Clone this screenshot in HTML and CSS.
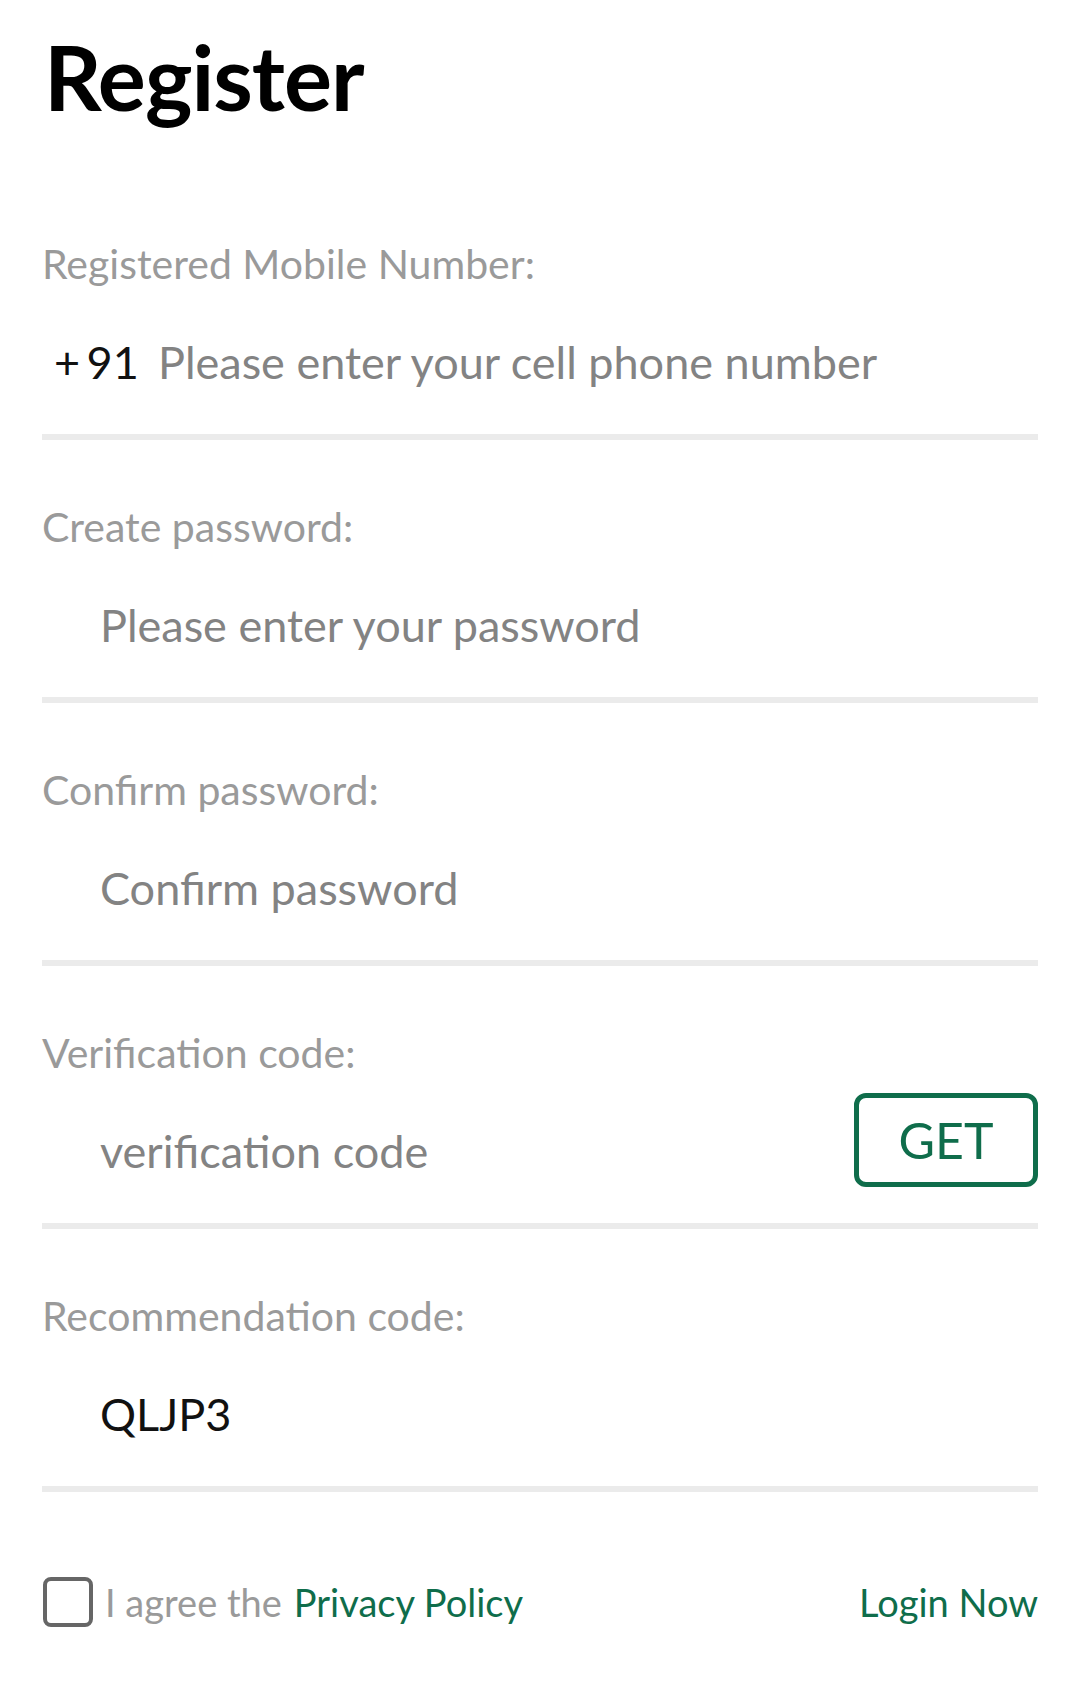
FILE: index.html
```html
<!DOCTYPE html>
<html lang="en">
<head>
<meta charset="utf-8">
<title>Register</title>
<link rel="stylesheet" href="styles.css">
</head>
<body>
<main class="page">
  <h1 class="title">Register</h1>

  <div class="field">
    <label class="label">Registered Mobile Number:</label>
    <div class="row">
      <span class="prefix">+ 91</span>
      <input class="input input-phone" type="tel" placeholder="Please enter your cell phone number">
    </div>
    <div class="divider"></div>
  </div>

  <div class="field">
    <label class="label">Create password:</label>
    <div class="row">
      <input class="input" type="password" placeholder="Please enter your password">
    </div>
    <div class="divider"></div>
  </div>

  <div class="field">
    <label class="label">Confirm password:</label>
    <div class="row">
      <input class="input" type="password" placeholder="Confirm password">
    </div>
    <div class="divider"></div>
  </div>

  <div class="field">
    <label class="label">Verification code:</label>
    <div class="row">
      <input class="input" type="text" placeholder="verification code">
      <button class="get-btn" type="button">GET</button>
    </div>
    <div class="divider"></div>
  </div>

  <div class="field">
    <label class="label">Recommendation code:</label>
    <div class="row">
      <input class="input" type="text" value="QLJP3">
    </div>
    <div class="divider"></div>
  </div>

  <div class="footer">
    <div class="agree">
      <span class="checkbox"></span>
      <span class="agree-text">I agree the</span>
      <a class="link" href="#">Privacy Policy</a>
    </div>
    <a class="link" href="#">Login Now</a>
  </div>
</main>
</body>
</html>
```

FILE: styles.css
```css
* { box-sizing: border-box; }

html, body {
  margin: 0;
  padding: 0;
  background: #ffffff;
}

body {
  font-family: Lato, "Noto Sans", "Liberation Sans", sans-serif;
  color: #111111;
}

.page {
  padding: 19px 42px 0 42px;
}

.title {
  margin: 0 0 43px 2px;
  font-size: 90px;
  line-height: 115px;
  font-weight: 700;
  color: #000000;
  letter-spacing: -1px;
}

.field {
  padding-top: 57px;
}

.label {
  display: block;
  font-size: 41px;
  line-height: 60px;
  color: #9a9a9a;
  height: 60px;
}

.row {
  display: flex;
  align-items: center;
  height: 60px;
  margin-top: 38px;
  margin-bottom: 42px;
}

.prefix {
  font-size: 45px;
  line-height: 60px;
  color: #111111;
  padding-left: 12px;
  width: 116px;
  flex: none;
  word-spacing: -5px;
}

.input {
  flex: 1;
  min-width: 0;
  border: 0;
  outline: none;
  background: transparent;
  padding: 0 0 0 58px;
  margin: 0;
  font-family: inherit;
  font-size: 45px;
  line-height: 60px;
  height: 60px;
  color: #111111;
}

.input-phone {
  padding-left: 0;
}

.input::placeholder {
  color: #838383;
  opacity: 1;
}

.divider {
  height: 6px;
  background: #ebebeb;
}

.get-btn {
  flex: none;
  align-self: flex-start;
  width: 184px;
  height: 94px;
  margin: -28px 0 -6px 0;
  padding: 0;
  border: 5px solid #0f6d4b;
  border-radius: 12px;
  background: #ffffff;
  color: #0f6d4b;
  font-family: inherit;
  font-size: 50px;
  line-height: 1;
}

.footer {
  display: flex;
  align-items: center;
  justify-content: space-between;
  margin-top: 85px;
  height: 50px;
}

.agree {
  display: flex;
  align-items: center;
}

.checkbox {
  width: 50px;
  height: 50px;
  border: 4px solid #666666;
  border-radius: 8px;
  margin-left: 1px;
  margin-right: 12px;
  flex: none;
}

.agree-text {
  font-size: 38px;
  color: #9a9a9a;
  margin-right: 12px;
}

.link {
  font-size: 38px;
  color: #0f6d4b;
  text-decoration: none;
}
```
